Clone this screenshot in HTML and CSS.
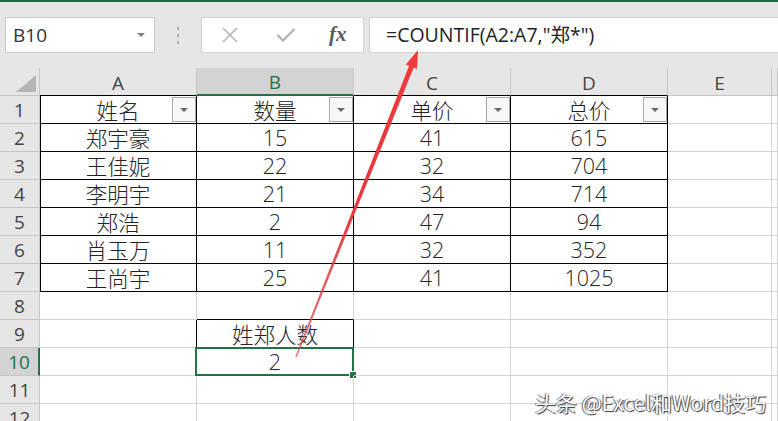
FILE: index.html
```html
<!DOCTYPE html>
<html lang="zh-CN">
<head>
    <meta charset="UTF-8">
    <meta name="viewport" content="width=device-width, initial-scale=1.0">
    <title>COUNTIF</title>
    <link rel="stylesheet" href="styles.css">
</head>
<body>
    <div class="topline"></div>
    <div class="formula-bar">
        <div class="name-box">B10<span class="caret"></span></div>
        <div class="grip"><i></i><i></i><i></i></div>
        <div class="fx-buttons">
            <svg class="icon" width="18" height="16" viewBox="0 0 18 16"><path d="M2 1 L16 15 M16 1 L2 15" stroke="#b4b4b4" stroke-width="1.6" fill="none"/></svg>
            <svg class="icon" width="20" height="16" viewBox="0 0 20 16"><path d="M1.5 8 L7 13.5 L18.5 2" stroke="#b4b4b4" stroke-width="2.4" fill="none"/></svg>
            <span class="fx">fx</span>
        </div>
        <div class="formula">=COUNTIF(A2:A7,"郑*")</div>
    </div>

    <div class="sheet">
        <div class="cell hd corner"><span class="tri"></span></div>
        <div class="cell hd dark-b">A</div>
        <div class="cell hd sel-col">B</div>
        <div class="cell hd dark-b">C</div>
        <div class="cell hd dark-b">D</div>
        <div class="cell hd">E</div>
        <div class="cell hd"></div>

        <div class="cell rh">1</div>
        <div class="cell tb le">姓名<span class="filter"></span></div>
        <div class="cell tb">数量<span class="filter"></span></div>
        <div class="cell tb">单价<span class="filter"></span></div>
        <div class="cell tb">总价<span class="filter"></span></div>
        <div class="cell"></div>
        <div class="cell"></div>

        <div class="cell rh">2</div>
        <div class="cell tb le">郑宇豪</div>
        <div class="cell tb">15</div>
        <div class="cell tb">41</div>
        <div class="cell tb">615</div>
        <div class="cell"></div>
        <div class="cell"></div>

        <div class="cell rh">3</div>
        <div class="cell tb le">王佳妮</div>
        <div class="cell tb">22</div>
        <div class="cell tb">32</div>
        <div class="cell tb">704</div>
        <div class="cell"></div>
        <div class="cell"></div>

        <div class="cell rh">4</div>
        <div class="cell tb le">李明宇</div>
        <div class="cell tb">21</div>
        <div class="cell tb">34</div>
        <div class="cell tb">714</div>
        <div class="cell"></div>
        <div class="cell"></div>

        <div class="cell rh">5</div>
        <div class="cell tb le">郑浩</div>
        <div class="cell tb">2</div>
        <div class="cell tb">47</div>
        <div class="cell tb">94</div>
        <div class="cell"></div>
        <div class="cell"></div>

        <div class="cell rh">6</div>
        <div class="cell tb le">肖玉万</div>
        <div class="cell tb">11</div>
        <div class="cell tb">32</div>
        <div class="cell tb">352</div>
        <div class="cell"></div>
        <div class="cell"></div>

        <div class="cell rh">7</div>
        <div class="cell tb le">王尚宇</div>
        <div class="cell tb">25</div>
        <div class="cell tb">41</div>
        <div class="cell tb">1025</div>
        <div class="cell"></div>
        <div class="cell"></div>

        <div class="cell rh">8</div>
        <div class="cell"></div>
        <div class="cell dark-b"></div>
        <div class="cell"></div>
        <div class="cell"></div>
        <div class="cell"></div>
        <div class="cell"></div>

        <div class="cell rh">9</div>
        <div class="cell dark-r"></div>
        <div class="cell tb">姓郑人数</div>
        <div class="cell"></div>
        <div class="cell"></div>
        <div class="cell"></div>
        <div class="cell"></div>

        <div class="cell rh sel-row">10</div>
        <div class="cell dark-r"></div>
        <div class="cell tb active">2<span class="handle"></span></div>
        <div class="cell"></div>
        <div class="cell"></div>
        <div class="cell"></div>
        <div class="cell"></div>

        <div class="cell rh">11</div>
        <div class="cell"></div>
        <div class="cell"></div>
        <div class="cell"></div>
        <div class="cell"></div>
        <div class="cell"></div>
        <div class="cell"></div>

        <div class="cell rh">12</div>
        <div class="cell"></div>
        <div class="cell"></div>
        <div class="cell"></div>
        <div class="cell"></div>
        <div class="cell"></div>
        <div class="cell"></div>
    </div>

    <!-- annotation arrow drawn over the sheet -->
    <svg class="arrow" width="778" height="421" viewBox="0 0 778 421">
        <defs>
            <linearGradient id="fade" x1="296" y1="357" x2="418" y2="50" gradientUnits="userSpaceOnUse">
                <stop offset="0" stop-color="#d9464a" stop-opacity="0.75"/>
                <stop offset="0.5" stop-color="#e8383c"/>
                <stop offset="1" stop-color="#f03a3a"/>
            </linearGradient>
        </defs>
        <polygon fill="url(#fade)" points="296.7,357.3 295.3,356.7 409.1,65.8 405.8,64.5 418,50 417,68.9 413.7,67.6"/>
    </svg>

    <div class="watermark">头条 @Excel和Word技巧</div>
</body>
</html>
```

FILE: styles.css
```css
body {
    margin: 0;
    width: 778px;
    height: 421px;
    overflow: hidden;
    position: relative;
    background-color: #fff;
    font-family: "Noto Sans CJK SC", sans-serif;
    color: #222;
}

.topline {
    height: 2px;
    background-color: #1f6b41;
}

.formula-bar {
    display: flex;
    align-items: flex-start;
    height: 66px;
    padding: 15px 0 0 5px;
    box-sizing: border-box;
    background-color: #e6e6e6;
}
.name-box {
    position: relative;
    width: 150px;
    height: 36px;
    box-sizing: border-box;
    padding-left: 7px;
    background-color: #fff;
    border: 1px solid #c9c9c9;
    font-family: "Open Sans", sans-serif;
    font-size: 19px;
    line-height: 34px;
    color: #333;
}
.caret {
    position: absolute;
    right: 9px;
    top: 15px;
    border-left: 4px solid transparent;
    border-right: 4px solid transparent;
    border-top: 4px solid #7a7a7a;
}
.grip {
    display: flex;
    flex-direction: column;
    gap: 4px;
    width: 46px;
    align-items: center;
    padding-top: 10px;
}
.grip i {
    display: block;
    width: 2px;
    height: 3px;
    background-color: #b0b0b0;
}
.fx-buttons {
    display: flex;
    align-items: center;
    width: 163px;
    height: 36px;
    box-sizing: border-box;
    background-color: #fff;
    border: 1px solid #d2d2d2;
    padding-left: 19px;
    gap: 37px;
}
.fx {
    font-family: "Liberation Serif", serif;
    font-style: italic;
    font-weight: bold;
    font-size: 21px;
    color: #5a5a5a;
    margin-left: -4px;
    margin-top: -2px;
}
.formula {
    flex: 1;
    height: 36px;
    margin-left: 5px;
    box-sizing: border-box;
    padding-left: 16px;
    background-color: #fff;
    border: 1px solid #d2d2d2;
    border-right: none;
    font-family: "Open Sans", "Noto Sans CJK SC", sans-serif;
    font-size: 19.5px;
    line-height: 34px;
    color: #222;
}

.sheet {
    display: grid;
    grid-template-columns: 40px 157px 157px 157px 157px 104px 1fr;
    grid-auto-rows: 28px;
}
.cell {
    position: relative;
    display: flex;
    align-items: center;
    justify-content: center;
    box-sizing: border-box;
    border-right: 1px solid #d4d4d4;
    border-bottom: 1px solid #d4d4d4;
    font-family: "Open Sans", "Noto Sans CJK SC", sans-serif;
    font-size: 21.5px;
    font-weight: 300;
    white-space: nowrap;
}
.hd, .rh {
    background-color: #e6e6e6;
    border-color: #c6c6c6;
    font-family: "Open Sans", sans-serif;
    font-size: 19px;
    font-weight: 400;
    color: #444;
}
.hd {
    padding-top: 2px;
}
.corner .tri {
    position: absolute;
    right: 3px;
    bottom: 3px;
    width: 0;
    height: 0;
    border-left: 20px solid transparent;
    border-bottom: 17px solid #b5b5b5;
}
.sel-col {
    background-color: #d3d3d3;
    color: #217346;
    border-bottom: 2px solid #217346;
}
.sel-row {
    background-color: #d3d3d3;
    color: #217346;
    border-right: 2px solid #217346;
}

.tb {
    border-right-color: #000;
    border-bottom-color: #000;
}
.le {
    box-shadow: inset 1px 0 0 #000;
}
.dark-b {
    border-bottom-color: #000;
}
.dark-r {
    border-right-color: #000;
}

.filter {
    position: absolute;
    right: 0;
    top: 1px;
    width: 24px;
    height: 25px;
    box-sizing: border-box;
    border: 1px solid #a9a9a9;
    background-color: #f7f7f7;
}
.filter::after {
    content: "";
    position: absolute;
    left: 7px;
    top: 10px;
    border-left: 4px solid transparent;
    border-right: 4px solid transparent;
    border-top: 4px solid #6a6a6a;
}

.active::before {
    content: "";
    position: absolute;
    left: -2px;
    top: -1px;
    right: -1px;
    bottom: -1px;
    border: 2px solid #217346;
}
.handle {
    position: absolute;
    right: -4px;
    bottom: -4px;
    width: 6px;
    height: 6px;
    background-color: #217346;
    border: 1px solid #fff;
}

.arrow {
    position: absolute;
    left: 0;
    top: 0;
    pointer-events: none;
}

.watermark {
    position: absolute;
    left: 535px;
    top: 387px;
    font-size: 21px;
    color: #fff;
    text-shadow: 1px 1px 1px #333, -1px 0 1px #555;
}
```
